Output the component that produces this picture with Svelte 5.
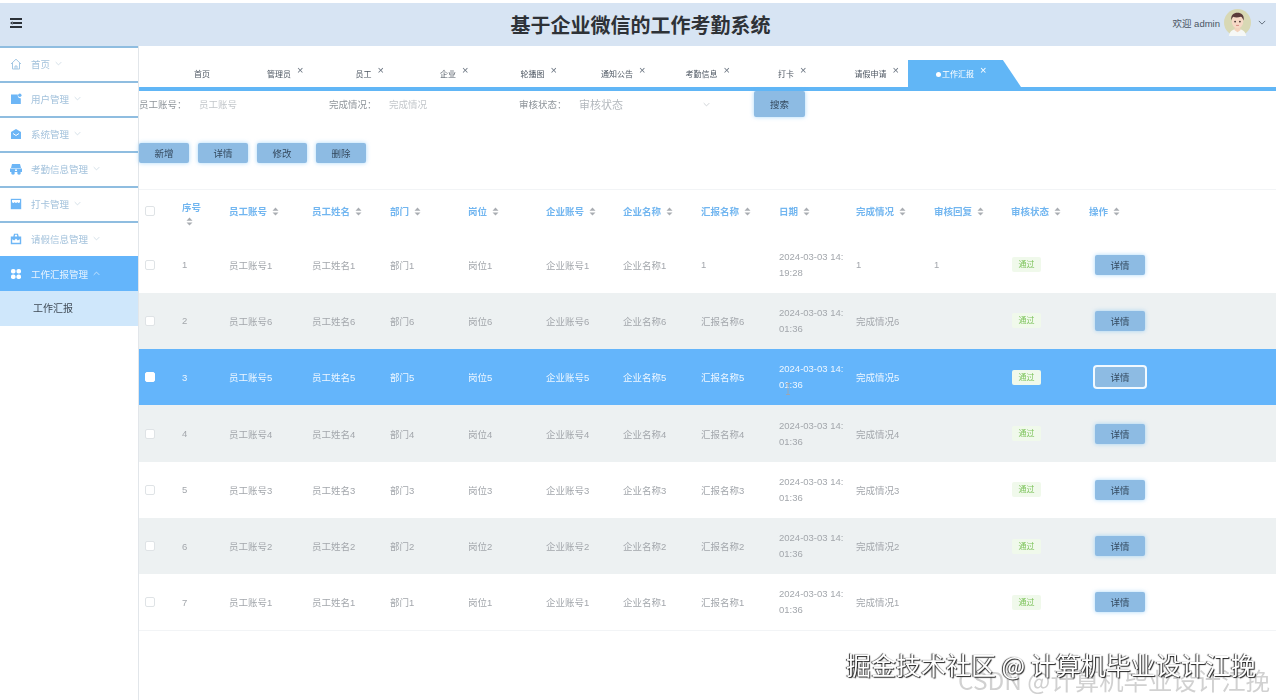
<script>
  const tabs = ['管理员', '员工', '企业', '轮播图', '通知公告', '考勤信息', '打卡', '请假申请'];
  const menus = [
    { name: '首页', icon: 'home' },
    { name: '用户管理', icon: 'user' },
    { name: '系统管理', icon: 'mail' },
    { name: '考勤信息管理', icon: 'car' },
    { name: '打卡管理', icon: 'shop' },
    { name: '请假信息管理', icon: 'bag' }
  ];
  const heads = ['员工账号', '员工姓名', '部门', '岗位', '企业账号', '企业名称', '汇报名称', '日期', '完成情况', '审核回复', '审核状态', '操作'];
  const rows = [
    { n: 1, k: 1, name: '1', t: '19:28', done: '1', reply: '1' },
    { n: 2, k: 6, t: '01:36' },
    { n: 3, k: 5, t: '01:36', sel: true },
    { n: 4, k: 4, t: '01:36' },
    { n: 5, k: 3, t: '01:36' },
    { n: 6, k: 2, t: '01:36' },
    { n: 7, k: 1, t: '01:36' }
  ];
</script>

{#snippet sort()}
  <svg class="sort" viewBox="0 0 8 10" aria-hidden="true"><path d="M4 .5 7.4 4H.6zM4 9.5.6 6h6.8z" /></svg>
{/snippet}

{#snippet chev(up = false)}
  <svg class="chev" viewBox="0 0 10 6" aria-hidden="true"><path d={up ? 'M1 5l4-4 4 4' : 'M1 1l4 4 4-4'} /></svg>
{/snippet}

<div class="page">
  <header class="top">
    <svg class="burger" viewBox="0 0 12 10" aria-hidden="true">
      <path d="M0 0h12v2H0zM3 4h9v2H3zM0 8h12v2H0zM0 5l2.600-1.800v3.600z" />
    </svg>
    <h1>基于企业微信的工作考勤系统</h1>
    <div class="user">
      <span>欢迎 admin</span>
      <svg class="avatar" viewBox="0 0 28 28" aria-hidden="true">
        <circle cx="14" cy="14" r="14" fill="#d8d8b4" />
        <path d="M5 28c1-6 5-7 9-7s8 1 9 7z" fill="#f6f8f6" />
        <path d="M11 18h6v4l-3 2-3-2z" fill="#f3d3bd" />
        <ellipse cx="14" cy="13" rx="6" ry="7" fill="#f6d9c6" />
        <path d="M7.500 12C7 6 10 4 14 4s7 2 6.500 8c-1-2-2-4-3-4-3 1-6 1-8 0-.8 1-1.500 2-2 4z" fill="#5a3a3a" />
        <circle cx="11.500" cy="13" r=".9" fill="#3b2a2a" />
        <circle cx="16.500" cy="13" r=".9" fill="#3b2a2a" />
        <path d="M12.500 17h3" stroke="#c9736d" stroke-width=".8" />
      </svg>
      {@render chev()}
    </div>
  </header>

  <div class="body">
    <nav class="side">
      {#each menus as m}
        <div class="menu">
          <svg class="ico" viewBox="0 0 12 12" aria-hidden="true">
            {#if m.icon === 'home'}
              <path class="line" d="M1 6 6 1.200 11 6M2.500 5v6h7V5M5 11V8h2v3" />
            {:else if m.icon === 'user'}
              <path d="M1 1.500h6.800v1.500A2.300 2.300 0 0 0 10.800 5.200V11H1z" /><circle cx="9.800" cy="2.200" r="1.700" />
            {:else if m.icon === 'mail'}
              <path d="M1 4 6 1l5 3v7H1z" /><path d="M3 5.500 6 7.500l3-2" fill="none" stroke="#fff" stroke-width="1" />
            {:else if m.icon === 'car'}
              <path d="M2 1h8l1 4H1zM0 5.500h12V9H0z" /><circle cx="3" cy="10" r="1.800" /><circle cx="9" cy="10" r="1.800" /><path d="M5 6.500h2v1.500H5z" fill="#fff" />
            {:else if m.icon === 'shop'}
              <path d="M.8.800h10.400v10.400H.8z" /><path d="M2 2h8v2c-.8 1.200-1.900 1.200-2.700 0-.8 1.200-1.800 1.200-2.600 0-.8 1.200-1.900 1.200-2.700 0z" fill="#fff" />
            {:else}
              <path d="M.8 3.500h2.500L4 .8h4l.7 2.700h2.500v7.700H.8z" /><path d="M4.800 3.500 5 1.800h2l.2 1.700zM2.200 9.800V6.200l2 1.300L6 5.500l1.800 2 2-1.300v3.600z" fill="#fff" />
            {/if}
          </svg>
          <span>{m.name}</span>
          {@render chev()}
        </div>
      {/each}
      <div class="menu active">
        <svg class="ico" viewBox="0 0 12 12" aria-hidden="true">
          <rect x="1" y="1" width="4.500" height="4.500" rx="1.800" /><rect x="6.500" y="1" width="4.500" height="4.500" rx="1.800" />
          <rect x="1" y="6.500" width="4.500" height="4.500" rx="1.800" /><rect x="6.500" y="6.500" width="4.500" height="4.500" rx="1.800" />
        </svg>
        <span>工作汇报管理</span>
        {@render chev(true)}
      </div>
      <div class="sub">工作汇报</div>
    </nav>

    <main class="main">
      <div class="tabs">
        <div class="tab first"><span class="lbl">首页</span></div>
        {#each tabs as t}
          <div class="tab"><span class="lbl">{t}<i class="x">×</i></span></div>
        {/each}
        <div class="tab on"><span class="lbl"><b class="dot"></b>工作汇报<i class="x">×</i></span></div>
      </div>

      <div class="search">
        <span class="f"><label>员工账号：</label><em>员工账号</em></span>
        <span class="f"><label>完成情况：</label><em>完成情况</em></span>
        <span class="f sel"><label>审核状态：</label><em>审核状态</em>{@render chev()}</span>
        <button class="btn">搜索</button>
      </div>

      <div class="actions">
        <button class="btn">新增</button>
        <button class="btn">详情</button>
        <button class="btn">修改</button>
        <button class="btn">删除</button>
      </div>

      <table>
        <colgroup>
          <col style="width:37px" /><col style="width:47px" /><col style="width:83px" />
          <col style="width:78px" /><col style="width:78px" /><col style="width:78px" />
          <col style="width:77px" /><col style="width:78px" /><col style="width:78px" />
          <col style="width:77px" /><col style="width:78px" /><col style="width:77px" />
          <col style="width:78px" /><col />
        </colgroup>
        <thead>
          <tr>
            <th><span class="box"></span></th>
            <th class="seq">序号 {@render sort()}</th>
            {#each heads as h}
              <th>{h} {@render sort()}</th>
            {/each}
          </tr>
        </thead>
        <tbody>
          {#each rows as r}
            <tr class:alt={r.n % 2 === 0} class:sel={r.sel}>
              <td><span class="box"></span></td>
              <td>{r.n}</td>
              <td>员工账号{r.k}</td>
              <td>员工姓名{r.k}</td>
              <td>部门{r.k}</td>
              <td>岗位{r.k}</td>
              <td>企业账号{r.k}</td>
              <td>企业名称{r.k}</td>
              <td>{r.name ?? `汇报名称${r.k}`}</td>
              <td class="date">2024-03-03 14:<br />{r.t}</td>
              <td>{r.done ?? `完成情况${r.k}`}</td>
              <td>{r.reply ?? ''}</td>
              <td><span class="tag">通过</span></td>
              <td class="op"><button class="btn">详情</button></td>
            </tr>
          {/each}
        </tbody>
      </table>
    </main>
  </div>

  <svg class="cursor" viewBox="0 0 6 12" aria-hidden="true"><path d="M1 .5h4M1 11.500h4M3 .5v11" /></svg>
  <div class="mark-b">CSDN @计算机毕业设计江挽</div>
  <div class="mark-a">掘金技术社区 @ 计算机毕业设计江挽</div>
</div>

<style>
  :global(body) {
    margin: 0;
    overflow: hidden;
    background: #fff;
  }
  .page {
    position: relative;
    height: 700px;
    padding-top: 3px;
    box-sizing: border-box;
    display: flex;
    flex-direction: column;
    font-family: "Liberation Sans", "Noto Sans CJK SC", sans-serif;
    font-size: 9.500px;
    color: #a3a7ac;
    overflow: hidden;
    filter: blur(0.35px);
  }
  .top {
    height: 43px;
    flex: none;
    background: #d7e4f3;
    display: flex;
    align-items: center;
    justify-content: center;
    position: relative;
  }
  .burger {
    position: absolute;
    left: 10px;
    top: 15px;
    width: 12px;
    height: 10px;
    fill: #2c3138;
  }
  h1 {
    margin: 0 0 0 5px;
    font-size: 20px;
    font-weight: 700;
    color: #2e3237;
    font-family: "Noto Sans CJK SC", sans-serif;
  }
  .user {
    position: absolute;
    right: 10px;
    top: 6px;
    display: flex;
    align-items: center;
    gap: 4px;
    color: #4a5563;
    font-size: 9.500px;
  }
  .avatar {
    width: 27px;
    height: 27px;
  }
  .chev {
    width: 7px;
    height: 5px;
    fill: none;
    stroke: currentColor;
    stroke-width: 1;
  }
  .user .chev {
    margin-left: 3px;
    width: 8px;
    color: #4a5563;
  }
  .body {
    flex: 1;
    display: flex;
    min-height: 0;
  }
  .side {
    width: 139px;
    flex: none;
    box-sizing: border-box;
    border-right: 1px solid #e2e6ea;
  }
  .menu {
    height: 35px;
    box-sizing: border-box;
    border-top: 2px solid #8fbde0;
    padding-bottom: 2px;
    display: flex;
    align-items: center;
    padding-left: 10px;
    gap: 9px;
    color: #a3c2dc;
    font-size: 9.500px;
  }
  .menu .chev {
    margin-left: -4px;
    color: #c3d2de;
  }
  .ico {
    width: 12px;
    height: 12px;
    fill: #6db6f6;
    flex: none;
  }
  .ico .line {
    fill: none;
    stroke: #a4c8e4;
    stroke-width: 1;
  }
  .menu.active {
    background: #64b5fb;
    border-top: 0;
    padding-bottom: 0;
    color: #e6f3fe;
  }
  .menu.active .ico {
    fill: #fff;
  }
  .menu.active .chev {
    color: #eaf5ff;
  }
  .sub {
    height: 35px;
    line-height: 35px;
    padding-left: 33px;
    background: #cfe7fb;
    color: #3f4a55;
    font-size: 10px;
  }
  .main {
    flex: 1;
    min-width: 0;
  }
  .tabs {
    display: flex;
    padding: 14px 0 0 8.500px;
    height: 27px;
    border-bottom: 4px solid #61b6f6;
    box-sizing: content-box;
    color: #4d5661;
    font-size: 8px;
  }
  .tab {
    width: 84.500px;
    flex: none;
    box-sizing: border-box;
    padding-left: 9.500px;
    display: flex;
    align-items: center;
    justify-content: center;
  }
  .tab.first {
    padding-left: 24.500px;
  }
  .lbl {
    position: relative;
  }
  .x {
    position: absolute;
    left: calc(100% + 6px);
    top: -4px;
    font-style: normal;
    font-size: 11px;
    line-height: 12px;
    color: #6a7480;
  }
  .dot {
    position: absolute;
    left: -6px;
    top: 3.500px;
    width: 5px;
    height: 5px;
    border-radius: 50%;
    background: #fff;
  }
  .tab.on {
    width: 113px;
    padding-left: 0;
    padding-right: 13px;
    background: #61b6f6;
    color: #fff;
    clip-path: polygon(0 0, 84% 0, 100% 100%, 0 100%);
  }
  .tab.on .x {
    color: #fff;
  }
  .search {
    display: flex;
    align-items: center;
    height: 26px;
    position: relative;
  }
  .f {
    width: 190px;
    flex: none;
    display: flex;
    align-items: center;
    box-sizing: border-box;
  }
  .f label {
    width: 60px;
    flex: none;
    color: #8f959b;
  }
  .f em {
    font-style: normal;
    color: #c3c7cb;
  }
  .f.sel {
    width: 235px;
  }
  .f.sel em {
    font-size: 11px;
    color: #b3b8bd;
    flex: 1;
  }
  .f.sel .chev {
    color: #bbc1c7;
    margin-right: 44px;
  }
  .btn {
    width: 50px;
    height: 20px;
    padding: 0;
    border: 0;
    border-radius: 2px;
    background: #8dbbe3;
    color: #34495e;
    font: inherit;
    box-shadow: 0 0 4px rgba(97, 182, 246, 0.55);
  }
  .search .btn {
    height: 26px;
    width: 51px;
  }
  .actions {
    display: flex;
    gap: 9px;
    padding-top: 26px;
    height: 20px;
  }
  table {
    width: 100%;
    table-layout: fixed;
    border-collapse: collapse;
    margin-top: 26px;
    border-top: 1px solid #f2f4f6;
  }
  th {
    height: 47px;
    box-sizing: border-box;
    padding: 0 0 4px 6px;
    text-align: left;
    font-weight: 600;
    color: #72b6f0;
  }
  th.seq {
    line-height: 16px;
    padding-bottom: 0;
  }
  th.seq .sort {
    display: block;
    margin: 1px 0 0 4px;
  }
  .sort {
    width: 7px;
    height: 9px;
    margin-left: 2px;
    vertical-align: -1px;
    fill: #a9adb2;
  }
  td {
    padding: 0 0 0 6px;
    white-space: nowrap;
  }
  tbody tr {
    height: 56.300px;
  }
  tbody tr:last-child {
    border-bottom: 1px solid #f2f4f6;
  }
  .date {
    line-height: 16px;
  }
  .alt {
    background: #edf1f2;
  }
  tr.sel {
    background: #64b5fb;
    color: #eef7ff;
  }
  .box {
    display: block;
    border: 1px solid #dfe3e6;
    border-radius: 2px;
    background: #fff;
    width: 8px;
    height: 8px;
  }
  tr.sel .box {
    border-color: #fff;
  }
  .tag {
    display: inline-block;
    margin-left: 1px;
    width: 29px;
    height: 15px;
    line-height: 15px;
    text-align: center;
    border-radius: 2px;
    font-size: 8px;
    background: #f0f9eb;
    color: #7cc35a;
  }
  .op .btn {
    display: block;
    margin-left: 6px;
  }
  tr.sel .op .btn {
    box-shadow: 0 0 0 2px #f1f9ff;
  }
  .cursor {
    position: absolute;
    left: 785px;
    top: 383px;
    width: 6px;
    height: 12px;
    fill: none;
    stroke: #9aa7b4;
    stroke-width: 1;
  }
  .mark-a,
  .mark-b {
    position: absolute;
    white-space: nowrap;
    font-family: "Noto Sans CJK SC", sans-serif;
  }
  .mark-a {
    left: 846px;
    top: 648px;
    font-size: 25px;
    line-height: 32px;
    color: #fff;
    text-shadow: 1px 1px 1px #222, -1px 0 1px #333;
  }
  .mark-b {
    left: 958px;
    top: 664px;
    font-size: 24.400px;
    line-height: 32px;
    color: rgba(190, 190, 190, 0.7);
  }
</style>
